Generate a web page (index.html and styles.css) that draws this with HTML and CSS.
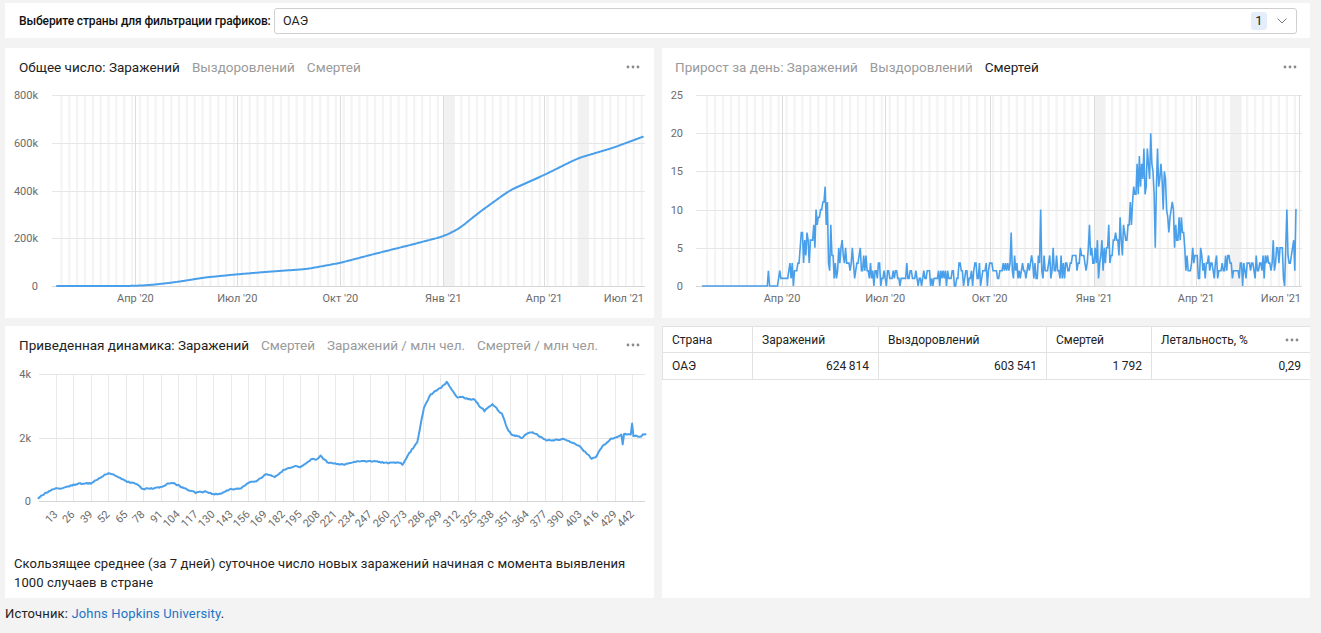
FILE: index.html
```html
<!DOCTYPE html>
<html lang="ru">
<head>
<meta charset="utf-8">
<title>COVID-19 — ОАЭ</title>
<link rel="stylesheet" href="styles.css">
</head>
<body>
<div class="page">
  <div class="filter">
    <span class="filter-label">Выберите страны для фильтрации графиков:</span>
    <div class="select">
      <span class="select-value">ОАЭ</span>
      <span class="badge">1</span>
      <svg class="chevron" width="10" height="6" viewBox="0 0 10 6"><path d="M0.5 0.5 L5 5 L9.5 0.5"/></svg>
    </div>
  </div>

  <div class="grid">
    <section class="card">
      <header class="card-head">
        <div class="tabs">
          <span class="tab active">Общее число: Заражений</span>
          <span class="tab">Выздоровлений</span>
          <span class="tab">Смертей</span>
        </div>
        <svg class="more" width="14" height="4" viewBox="0 0 14 4"><circle cx="2" cy="2" r="1.4"/><circle cx="7" cy="2" r="1.4"/><circle cx="12" cy="2" r="1.4"/></svg>
      </header>
      <svg id="chart-total" class="chart" width="649" height="232" viewBox="5 86 649 232"></svg>
    </section>

    <section class="card">
      <header class="card-head right">
        <div class="tabs">
          <span class="tab">Прирост за день: Заражений</span>
          <span class="tab">Выздоровлений</span>
          <span class="tab active">Смертей</span>
        </div>
        <svg class="more" width="14" height="4" viewBox="0 0 14 4"><circle cx="2" cy="2" r="1.4"/><circle cx="7" cy="2" r="1.4"/><circle cx="12" cy="2" r="1.4"/></svg>
      </header>
      <svg id="chart-daily" class="chart" width="648" height="232" viewBox="662 86 648 232"></svg>
    </section>

    <section class="card">
      <header class="card-head">
        <div class="tabs">
          <span class="tab active">Приведенная динамика: Заражений</span>
          <span class="tab">Смертей</span>
          <span class="tab">Заражений / млн чел.</span>
          <span class="tab">Смертей / млн чел.</span>
        </div>
        <svg class="more" width="14" height="4" viewBox="0 0 14 4"><circle cx="2" cy="2" r="1.4"/><circle cx="7" cy="2" r="1.4"/><circle cx="12" cy="2" r="1.4"/></svg>
      </header>
      <svg id="chart-norm" class="chart" width="649" height="180" viewBox="5 364 649 180"></svg>
      <p class="note">Скользящее среднее (за 7 дней) суточное число новых заражений начиная с момента выявления 1000 случаев в стране</p>
    </section>

    <section class="card">
      <table class="stats">
        <colgroup><col class="c1"><col class="c2"><col class="c3"><col class="c4"><col class="c5"></colgroup>
        <thead>
          <tr>
            <th>Страна</th>
            <th>Заражений</th>
            <th>Выздоровлений</th>
            <th>Смертей</th>
            <th><div class="th-last"><span>Летальность, %</span><svg class="more" width="14" height="4" viewBox="0 0 14 4"><circle cx="2" cy="2" r="1.4"/><circle cx="7" cy="2" r="1.4"/><circle cx="12" cy="2" r="1.4"/></svg></div></th>
          </tr>
        </thead>
        <tbody>
          <tr>
            <td>ОАЭ</td>
            <td class="num">624&#8201;814</td>
            <td class="num">603&#8201;541</td>
            <td class="num">1&#8201;792</td>
            <td class="num">0,29</td>
          </tr>
        </tbody>
      </table>
    </section>
  </div>

  <footer class="source">Источник: <a href="#">Johns Hopkins University</a>.</footer>
</div>
<script src="script.js"></script>
</body>
</html>
```

FILE: styles.css
```css
* { box-sizing: border-box; }

html, body {
  margin: 0;
  padding: 0;
  background: #f3f3f3;
  font-family: Roboto, "Liberation Sans", Arial, sans-serif;
  color: #222;
}

.page {
  width: 1321px;
  padding: 3px 11px 0 5px;
}

.filter {
  height: 35px;
  background: #fff;
  display: flex;
  align-items: center;
  padding: 0 13px 0 14px;
}

.filter-label {
  flex: 0 0 255px;
  min-width: 0;
  font-size: 12px;
  font-weight: 500;
  letter-spacing: -0.12px;
  color: #111;
  white-space: nowrap;
}

.select {
  flex: 1;
  height: 26px;
  border: 1px solid #cfcfcf;
  border-radius: 3px;
  display: flex;
  align-items: center;
  padding: 0 7px 0 8px;
  font-size: 12.5px;
  color: #222;
}

.select-value { flex: 1; }

.badge {
  width: 16px;
  height: 18px;
  border-radius: 3px;
  background: #e4eefa;
  display: flex;
  align-items: center;
  justify-content: center;
  font-size: 13px;
  color: #222;
  margin-right: 10px;
}

.chevron { fill: none; stroke: #777; stroke-width: 1; margin-right: 2px; }

.grid {
  margin-top: 10px;
  display: grid;
  grid-template-columns: 649px 648px;
  grid-template-rows: 270px 272px;
  gap: 8px;
}

.card {
  background: #fff;
  display: flex;
  flex-direction: column;
  overflow: hidden;
}

.card-head {
  height: 38px;
  flex: 0 0 38px;
  display: flex;
  align-items: center;
  justify-content: space-between;
  padding: 0 14px 0 14px;
}

.card-head.right { padding: 0 13px 0 13px; }

.tabs {
  display: flex;
  gap: 12px;
  font-size: 13.5px;
  white-space: nowrap;
}

.tab { color: #9a9a9a; }
.tab.active { color: #222; }

.more { fill: #8a8a8a; display: block; }

.chart { display: block; flex: 0 0 auto; }

.note {
  margin: 0;
  padding: 10px 9px 6px 9px;
  font-size: 13px;
  line-height: 19px;
  letter-spacing: 0.1px;
  color: #222;
}

/* chart elements */
.wk { fill: #f4f4f4; }
.hol { fill: #f1f1f1; }
.ql { stroke: #dcdcdc; stroke-width: 1; shape-rendering: crispEdges; }
.vl { stroke: #e9e9e9; stroke-width: 1; shape-rendering: crispEdges; }
.hl { stroke: #e6e6e6; stroke-width: 1; shape-rendering: crispEdges; }
.base { stroke: #d6d6d6; stroke-width: 1; shape-rendering: crispEdges; }
.yl, .xl { font-family: Roboto, "Liberation Sans", Arial, sans-serif; font-size: 11px; fill: #6b6b6b; }
.line { fill: none; stroke: #4a9fea; stroke-width: 2; stroke-linejoin: round; stroke-linecap: round; }
.line.thin { stroke-width: 1.6; stroke-linejoin: miter; }

/* table */
.stats {
  width: 648px;
  border-collapse: collapse;
  table-layout: fixed;
  font-size: 12px;
  color: #222;
}
.stats col.c1 { width: 90px; }
.stats col.c2 { width: 126px; }
.stats col.c3 { width: 168px; }
.stats col.c4 { width: 105px; }
.stats col.c5 { width: 159px; }

.stats th, .stats td {
  border: 1px solid #e2e2e2;
  padding: 0 9px;
  text-align: left;
  font-weight: 400;
  white-space: nowrap;
}
.stats th { height: 26px; }
.stats td { height: 27px; }
.stats td.num { text-align: right; }

.th-last {
  display: flex;
  align-items: center;
  justify-content: space-between;
  padding-right: 2px;
}

.source {
  padding-top: 7px;
  font-size: 13px;
  line-height: 18px;
  letter-spacing: 0.15px;
  color: #222;
}
.source a { color: #1e73c7; text-decoration: none; }
```

FILE: script.js
```js
(function () {
  var NS = 'http://www.w3.org/2000/svg';
  function el(p, tag, a, t) {
    var e = document.createElementNS(NS, tag);
    for (var k in a) e.setAttribute(k, a[k]);
    if (t !== undefined) e.textContent = t;
    p.appendChild(e);
    return e;
  }
  var D0 = Date.UTC(2020, 0, 22);
  function day(y, m, d) { return Math.round((Date.UTC(y, m - 1, d) - D0) / 864e5); }
  var LAST = day(2021, 6, 28);

  function interp(keys, d) {
    if (d <= keys[0][0]) return keys[0][1];
    for (var i = 1; i < keys.length; i++) {
      if (d <= keys[i][0]) {
        var a = keys[i - 1], b = keys[i];
        return a[1] + (b[1] - a[1]) * (d - a[0]) / (b[0] - a[0]);
      }
    }
    return keys[keys.length - 1][1];
  }
  var s = 97;
  function rnd() { s = (s * 16807) % 2147483647; return (s - 1) / 2147483646; }
  function gauss() { return (rnd() + rnd() + rnd() - 1.5) * 1.4; }
  function pathFrom(pts) {
    var out = '';
    for (var i = 0; i < pts.length; i++) out += (i ? 'L' : 'M') + pts[i][0].toFixed(2) + ' ' + pts[i][1].toFixed(2);
    return out;
  }

  function timeChart(svg, o) {
    var top = o.top, bot = o.bot, L = o.left, R = o.right;
    function X(d) { return o.x0 + d * o.k; }
    for (var d = 3; d <= LAST + 10; d += 7) {
      var x = X(d);
      if (x >= R) break;
      el(svg, 'rect', { x: x, y: top, width: Math.min(2 * o.k, R - x), height: bot - top, 'class': 'wk' });
    }
    [[day(2021, 1, 1), day(2021, 1, 10)], [day(2021, 5, 1), day(2021, 5, 10)]].forEach(function (h) {
      el(svg, 'rect', { x: X(h[0]), y: top, width: (h[1] - h[0] + 1) * o.k, height: bot - top, 'class': 'hol' });
    });
    o.ticks.forEach(function (v) {
      var y = Math.round(bot - (v / o.max) * (bot - top)) + 0.5;
      el(svg, 'line', { x1: L, x2: R, y1: y, y2: y, 'class': v === 0 ? 'base' : 'hl' });
      el(svg, 'text', { x: o.lx, y: y + 3.5, 'class': 'yl', 'text-anchor': 'end' }, o.fmt(v));
    });
    var q = [[day(2020, 4, 1), "Апр '20"], [day(2020, 7, 1), "Июл '20"], [day(2020, 10, 1), "Окт '20"],
             [day(2021, 1, 1), "Янв '21"], [day(2021, 4, 1), "Апр '21"], [day(2021, 7, 1), "Июл '21"]];
    q.forEach(function (it) {
      var x = X(it[0]);
      if (x < R) el(svg, 'line', { x1: Math.round(x) + 0.5, x2: Math.round(x) + 0.5, y1: top, y2: bot, 'class': 'ql' });
      var last = x + 18 > R;
      el(svg, 'text', { x: last ? R - 1 : x, y: bot + 16, 'class': 'xl', 'text-anchor': last ? 'end' : 'middle' }, it[1]);
    });
    var pts = o.data.map(function (v, d) { return [X(d), bot - (v / o.max) * (bot - top)]; });
    el(svg, 'path', { d: pathFrom(pts), 'class': o.cls });
  }

  /* cumulative cases (thousands) */
  var cumKeys = [[0, 0], [day(2020, 3, 1), 0.02], [day(2020, 3, 20), 0.14], [day(2020, 4, 1), 0.7],
    [day(2020, 4, 15), 4.5], [day(2020, 5, 1), 12.5], [day(2020, 5, 15), 22], [day(2020, 6, 1), 35],
    [day(2020, 7, 1), 49], [day(2020, 8, 1), 61], [day(2020, 9, 1), 71], [day(2020, 10, 1), 97],
    [day(2020, 11, 1), 135], [day(2020, 12, 1), 170], [day(2021, 1, 1), 208], [day(2021, 1, 15), 240],
    [day(2021, 2, 1), 305], [day(2021, 3, 1), 400], [day(2021, 4, 1), 465], [day(2021, 5, 1), 535],
    [day(2021, 6, 1), 578], [day(2021, 6, 28), 625]];
  var raw = [], cum = [];
  for (var d = 0; d <= LAST; d++) raw.push(interp(cumKeys, d));
  for (d = 0; d <= LAST; d++) {
    var w = Math.min(6, d, LAST - d), sum = 0, n = 0;
    for (var j = d - w; j <= d + w; j++) { sum += raw[j]; n++; }
    cum.push(sum / n);
  }

  /* daily deaths */
  var dKeys = [[0, 0], [day(2020, 3, 27), 0], [day(2020, 3, 28), 0.8], [day(2020, 4, 5), 1.6],
    [day(2020, 4, 15), 3.5], [day(2020, 4, 25), 6], [day(2020, 5, 3), 8], [day(2020, 5, 9), 10.5],
    [day(2020, 5, 13), 9], [day(2020, 5, 15), 3.2], [day(2020, 6, 1), 3.2], [day(2020, 6, 15), 1.9],
    [day(2020, 7, 1), 1.5], [day(2020, 8, 1), 1.1], [day(2020, 9, 1), 1.3], [day(2020, 10, 1), 2.1],
    [day(2020, 11, 1), 2.6], [day(2020, 12, 1), 2.6], [day(2021, 1, 1), 3.4], [day(2021, 1, 20), 5.2],
    [day(2021, 2, 1), 8.5], [day(2021, 2, 12), 13.5], [day(2021, 2, 22), 15.5], [day(2021, 3, 3), 12.5],
    [day(2021, 3, 15), 7], [day(2021, 3, 25), 3.6], [day(2021, 4, 5), 2.8], [day(2021, 5, 1), 2.6],
    [day(2021, 6, 1), 2.8], [day(2021, 6, 20), 3.5], [day(2021, 6, 28), 5]];
  var deaths = [];
  for (d = 0; d <= LAST; d++) {
    var b = interp(dKeys, d), v = 0;
    if (b > 0) {
      v = Math.round(b + gauss() * Math.max(0.9, Math.sqrt(b) * 0.95));
      if (v < 0) v = 0;
    }
    deaths.push(v);
  }
  function setD(dd, val) { if (dd >= 0 && dd <= LAST) deaths[dd] = val; }
  setD(58, 2); for (d = 59; d <= 65; d++) setD(d, 0);
  setD(day(2020, 5, 8), 11); setD(day(2020, 5, 9), 13); setD(day(2020, 5, 10), 8); setD(day(2020, 5, 11), 11);
  setD(day(2020, 5, 12), 3); setD(day(2020, 5, 13), 2);
  setD(day(2020, 10, 20), 7); setD(day(2020, 11, 15), 10); setD(day(2020, 12, 28), 8);
  setD(day(2021, 2, 10), 17); setD(day(2021, 2, 14), 18); setD(day(2021, 2, 20), 20); setD(day(2021, 2, 21), 16);
  setD(day(2021, 2, 24), 5); setD(day(2021, 2, 26), 18); setD(day(2021, 3, 1), 16); setD(day(2021, 3, 12), 10);
  setD(day(2021, 6, 18), 0); setD(day(2021, 6, 20), 10); setD(day(2021, 6, 21), 4);
  setD(LAST - 2, 6); setD(LAST - 1, 2); setD(LAST, 10);

  timeChart(document.getElementById('chart-total'), {
    left: 52, right: 645, top: 95, bot: 286, x0: 57, k: 1.12, max: 800,
    ticks: [0, 200, 400, 600, 800], lx: 38,
    fmt: function (v) { return v ? v + 'k' : '0'; }, data: cum, cls: 'line'
  });
  timeChart(document.getElementById('chart-daily'), {
    left: 696, right: 1302, top: 95, bot: 286, x0: 702.6, k: 1.1345, max: 25,
    ticks: [0, 5, 10, 15, 20, 25], lx: 683,
    fmt: function (v) { return String(v); }, data: deaths, cls: 'line thin'
  });

  /* normalized dynamics (thousands) */
  var nKeys = [[0, 0.1], [5, 0.25], [13, 0.42], [16, 0.38], [23, 0.48], [30, 0.55], [39, 0.55], [45, 0.72],
    [52, 0.88], [55, 0.86], [65, 0.63], [72, 0.55], [78, 0.37], [91, 0.43], [97, 0.56], [100, 0.58],
    [108, 0.4], [117, 0.26], [124, 0.3], [130, 0.21], [136, 0.23], [143, 0.37], [150, 0.38], [156, 0.58],
    [162, 0.62], [169, 0.84], [176, 0.77], [182, 0.95], [190, 1.1], [195, 1.07], [204, 1.34], [206, 1.28],
    [210, 1.42], [215, 1.22], [221, 1.17], [228, 1.15], [234, 1.23], [247, 1.26], [260, 1.2], [268, 1.22],
    [271, 1.15], [276, 1.5], [282, 1.84], [287, 2.95], [292, 3.35], [295, 3.45], [300, 3.58], [304, 3.75],
    [308, 3.47], [312, 3.26], [316, 3.27], [320, 3.2], [325, 3.2], [328, 3.0], [332, 2.84], [338, 3.05],
    [345, 2.74], [350, 2.2], [353, 2.08], [360, 2.0], [364, 2.13], [368, 2.16], [372, 2.07], [377, 1.93],
    [383, 1.9], [390, 1.96], [396, 1.86], [403, 1.72], [408, 1.5], [412, 1.34], [415, 1.4], [420, 1.72],
    [426, 1.95], [431, 2.0], [434, 2.08], [435, 1.78], [436, 2.1], [441, 2.1], [442, 2.42], [443, 2.05],
    [448, 2.04], [452, 2.12]];
  var norm = [];
  for (d = 0; d <= 452; d++) norm.push(interp(nKeys, d) + (rnd() - 0.5) * 0.04);

  var svgN = document.getElementById('chart-norm');
  var nt = { left: 39, right: 645, top: 374, bot: 501, x0: 38.5, k: 1.343, max: 4 };
  for (var t = 13; t <= 442; t += 13) {
    var x = Math.round(nt.x0 + t * nt.k) + 0.5;
    el(svgN, 'line', { x1: x, x2: x, y1: nt.top, y2: nt.bot, 'class': 'vl' });
    var lx = x + 2, ly = 515;
    el(svgN, 'text', { x: lx, y: ly, 'class': 'xl', 'text-anchor': 'end', transform: 'rotate(-45 ' + lx + ' ' + ly + ')' }, String(t));
  }
  [0, 2, 4].forEach(function (v) {
    var y = Math.round(nt.bot - (v / nt.max) * (nt.bot - nt.top)) + 0.5;
    el(svgN, 'line', { x1: nt.left, x2: nt.right, y1: y, y2: y, 'class': v === 0 ? 'base' : 'hl' });
    el(svgN, 'text', { x: 31, y: y + 3.5, 'class': 'yl', 'text-anchor': 'end' }, v ? v + 'k' : '0');
  });
  var pts = norm.map(function (v, dd) { return [nt.x0 + dd * nt.k, nt.bot - (v / nt.max) * (nt.bot - nt.top)]; });
  el(svgN, 'path', { d: pathFrom(pts), 'class': 'line' });
})();
```
